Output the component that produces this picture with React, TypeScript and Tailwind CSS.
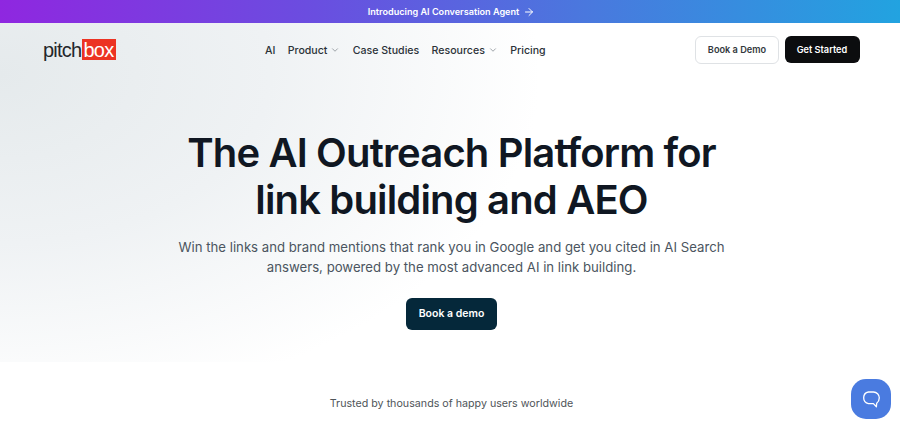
import React from "react";
import { ArrowRight, ChevronDown } from "lucide-react";

const navItems = [
  { label: "AI" },
  { label: "Product", caret: true },
  { label: "Case Studies" },
  { label: "Resources", caret: true },
  { label: "Pricing" },
];

export default function App() {
  return (
    <div className="relative h-[422px] overflow-hidden bg-white font-['Inter',sans-serif]">
      <div className="flex h-[23px] items-center justify-center gap-[4px] bg-[linear-gradient(90deg,#8f27e0_0%,#6a4ee0_35%,#4a78de_65%,#22a3e0_100%)] pl-[3px] text-[9.1px] font-semibold text-white">
        <span>Introducing AI Conversation Agent</span>
        <ArrowRight size={12} strokeWidth={2} />
      </div>

      <div className="h-[339px] bg-[radial-gradient(ellipse_540px_340px_at_0%_15%,#e5eaec_0%,#eff2f4_50%,#ffffff_100%)]">
        <header className="flex h-[53px] items-center pl-[43px] pr-[40.5px]">
          <div className="flex w-[222px] items-center font-['Liberation_Sans',sans-serif] text-[20px] tracking-[-0.75px]">
            <span className="text-[#23272b]">pitch</span>
            <span className="flex h-[21px] items-center bg-[#ec3323] px-[2px] text-white">box</span>
          </div>

          <nav className="mt-[2px] flex items-center gap-[12.3px] text-[10.6px] font-medium text-[#2b3238]">
            {navItems.map((item) => (
              <span key={item.label} className="flex items-center gap-[3px]">
                {item.label}
                {item.caret && <ChevronDown size={10} className="text-[#8d9399]" />}
              </span>
            ))}
          </nav>

          <div className="ml-auto flex items-center gap-[5.5px] text-[9.2px] font-semibold">
            <button className="h-[28px] w-[84px] rounded-[6px] border border-[#dfe2e5] bg-white text-[#33383d]">
              Book a Demo
            </button>
            <button className="h-[27px] w-[75px] rounded-[6px] bg-[#0c0d0f] text-white">Get Started</button>
          </div>
        </header>

        <main className="flex flex-col items-center pt-[53px] pl-[3px] text-center">
          <h1 className="text-[40px] leading-[47px] font-semibold tracking-[-0.85px] text-[#101722]">
            The AI Outreach Platform for
            <br />
            link building and AEO
          </h1>
          <p className="mt-[14px] w-[560px] text-[13.2px] leading-[20px] text-[#4b5560]">
            Win the links and brand mentions that rank you in Google and get you cited in AI Search answers, powered by the most advanced AI in link building.
          </p>
          <button className="mt-[21px] h-[32px] w-[91px] rounded-[6px] bg-[#05283a] text-[10.5px] font-semibold text-white">
            Book a demo
          </button>
        </main>
      </div>

      <p className="pt-[34px] pl-[3px] text-center text-[10.7px] text-[#4f5559]">Trusted by thousands of happy users worldwide</p>

      <div className="absolute top-[379px] left-[851px] flex h-[40px] w-[40px] items-center justify-center rounded-[15px] bg-[#4a7be0]">
        <svg width="18" height="17" viewBox="0 0 18 17" fill="none" stroke="white" strokeWidth="1.3" strokeLinejoin="round">
          <path d="M6.5 1h5a5.8 5.8 0 0 1 5.8 5.8c0 2.4-1 4.2-2.6 5.4l-.3 3.6-3-3.2H6.500A5.900 5.900 0 0 1 6.500 1Z" />
        </svg>
      </div>
    </div>
  );
}
